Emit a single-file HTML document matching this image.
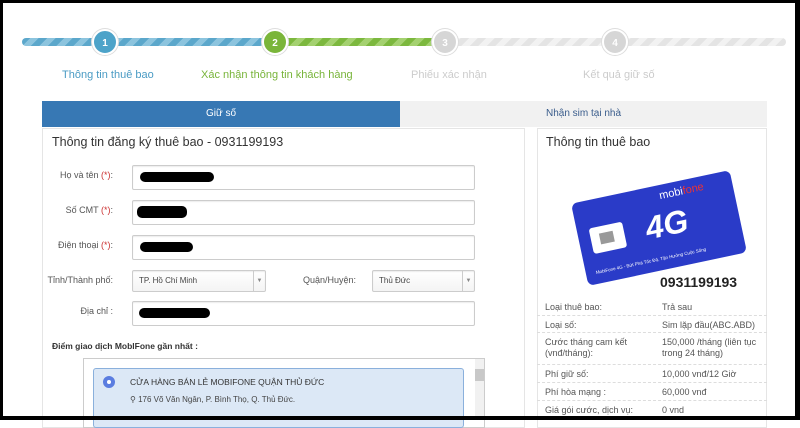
<!DOCTYPE html><html><head><meta charset="utf-8"><style>
*{box-sizing:border-box;margin:0;padding:0}
body{width:800px;height:420px;overflow:hidden;background:#fff;font-family:"Liberation Sans",sans-serif;position:relative}
.frame{position:absolute;inset:0;border:3px solid #000;border-right-width:5px;border-bottom-width:4px;z-index:10;pointer-events:none}
.abs{position:absolute}
.bar{height:8px;top:38px;border-radius:4px}
.circ{width:26px;height:26px;border-radius:50%;top:29px;color:#fff;font-size:10px;text-align:center;line-height:26px;font-weight:bold;border:2px solid #fff;box-shadow:0 0 0 1px #ddd}
.lbl{top:69px;font-size:11px}
.inp{border:1px solid #ccc;border-radius:2px;background:#fff;box-shadow:inset 0 1px 1px rgba(0,0,0,.08)}
.fl{font-size:9px;color:#555;text-align:right;width:80px;left:33px}
.fl span{color:#c33}
.blk{background:#000;height:10px;border-radius:5px}
.row{left:537px;width:230px;border-bottom:1px dashed #ddd;font-size:9px;color:#555}
.row .a{position:absolute;left:8px}.row .b{position:absolute;left:125px}
</style></head><body>
<div class="frame"></div>
<div class="abs bar" style="left:22px;width:250px;background:repeating-linear-gradient(135deg,#5ba7cb 0 6px,#8cc4de 6px 12px)"></div>
<div class="abs bar" style="left:272px;width:172px;background:repeating-linear-gradient(135deg,#7cb83e 0 6px,#a4d170 6px 12px)"></div>
<div class="abs bar" style="left:444px;width:342px;background:repeating-linear-gradient(135deg,#e4e4e4 0 6px,#f2f2f2 6px 12px)"></div>
<div class="abs circ" style="left:92px;background:#4da3c9">1</div>
<div class="abs circ" style="left:262px;background:#7ab53a">2</div>
<div class="abs circ" style="left:432px;background:#d6d6d6">3</div>
<div class="abs circ" style="left:602px;background:#d6d6d6">4</div>
<div class="abs lbl" style="left:62px;color:#4a9bc4">Thông tin thuê bao</div>
<div class="abs lbl" style="left:201px;color:#78b43a">Xác nhận thông tin khách hàng</div>
<div class="abs lbl" style="left:411px;color:#ccc">Phiếu xác nhận</div>
<div class="abs lbl" style="left:583px;color:#ccc">Kết quả giữ số</div>
<div class="abs" style="left:42px;top:101px;width:358px;height:26px;background:#3778b4;color:#fff;font-size:10px;text-align:center;line-height:26px">Giữ số</div>
<div class="abs" style="left:400px;top:101px;width:367px;height:26px;background:#f1f1f1;color:#3a5d8c;font-size:10px;text-align:center;line-height:26px">Nhận sim tại nhà</div>
<div class="abs" style="left:42px;top:128px;width:483px;height:300px;border:1px solid #e5e5e5"></div>
<div class="abs" style="left:537px;top:128px;width:230px;height:300px;border:1px solid #e5e5e5"></div>
<div class="abs" style="left:52px;top:135px;font-size:12.5px;color:#333">Thông tin đăng ký thuê bao - 0931199193</div>
<div class="abs fl" style="top:170px">Họ và tên <span>(*)</span>:</div>
<div class="abs inp" style="left:132px;top:165px;width:343px;height:25px"></div><div class="abs blk" style="left:140px;top:172px;width:74px"></div>
<div class="abs fl" style="top:205px">Số CMT <span>(*)</span>:</div>
<div class="abs inp" style="left:132px;top:200px;width:343px;height:25px"></div><div class="abs blk" style="left:137px;top:206px;width:50px;height:12px"></div>
<div class="abs fl" style="top:240px">Điện thoại <span>(*)</span>:</div>
<div class="abs inp" style="left:132px;top:235px;width:343px;height:25px"></div><div class="abs blk" style="left:140px;top:242px;width:53px"></div>
<div class="abs fl" style="top:275px;font-size:9px">Tỉnh/Thành phố:</div>
<div class="abs inp" style="left:132px;top:270px;width:134px;height:22px;font-size:8px;color:#444;padding:5px 6px;background:linear-gradient(#fff,#f4f4f4)">TP. Hồ Chí Minh<div class="abs" style="right:0;top:0;width:12px;height:20px;border-left:1px solid #ccc;font-size:6px;text-align:center;line-height:20px;color:#888">▼</div></div>
<div class="abs" style="left:303px;top:275px;font-size:9px;color:#555">Quận/Huyện:</div>
<div class="abs inp" style="left:372px;top:270px;width:103px;height:22px;font-size:8px;color:#444;padding:5px 6px;background:linear-gradient(#fff,#f4f4f4)">Thủ Đức<div class="abs" style="right:0;top:0;width:12px;height:20px;border-left:1px solid #ccc;font-size:6px;text-align:center;line-height:20px;color:#888">▼</div></div>
<div class="abs fl" style="top:306px">Địa chỉ :</div>
<div class="abs inp" style="left:132px;top:301px;width:343px;height:25px"></div><div class="abs blk" style="left:139px;top:308px;width:71px"></div>
<div class="abs" style="left:52px;top:341px;font-size:8.5px;font-weight:bold;color:#333">Điểm giao dịch MoblFone gần nhất :</div>
<div class="abs" style="left:83px;top:358px;width:402px;height:70px;border:1px solid #ccc"></div>
<div class="abs" style="left:475px;top:359px;width:9px;height:60px;background:#f1f1f1"><div style="margin-top:10px;height:12px;background:#c8c8c8"></div></div>
<div class="abs" style="left:93px;top:368px;width:371px;height:60px;border:1px solid #8ab0dc;border-radius:3px;background:#dce8f6"></div>
<div class="abs" style="left:103px;top:376px;width:12px;height:12px;border-radius:50%;background:#5b7de0;border:3px solid #5b7de0"><div style="width:4px;height:4px;margin:1px;background:#fff;border-radius:50%"></div></div>
<div class="abs" style="left:130px;top:377px;font-size:8.5px;color:#333">CỬA HÀNG BÁN LẺ MOBIFONE QUẬN THỦ ĐỨC</div>
<div class="abs" style="left:130px;top:395px;font-size:8px;color:#444">⚲ 176 Võ Văn Ngân, P. Bình Thọ, Q. Thủ Đức.</div>
<div class="abs" style="left:546px;top:135px;font-size:12.5px;color:#333">Thông tin thuê bao</div>
<div class="abs" style="left:578px;top:186px;width:162px;height:84px;background:#2a3bc8;border-radius:6px;transform:rotate(-12deg);transform-origin:center">
<div class="abs" style="left:12px;top:28px;width:34px;height:26px;background:#fff;border-radius:3px"><div style="margin:7px 9px;width:14px;height:11px;background:#999"></div></div>
<div class="abs" style="left:68px;top:22px;color:#fff;font-size:32px;font-weight:bold;font-style:italic">4G</div>
<div class="abs" style="left:88px;top:5px;color:#fff;font-size:11px">mobi<span style="color:#e33">fone</span></div>
<div class="abs" style="left:10px;top:70px;color:#fff;font-size:4.5px">MobiFone 4G - Bứt Phá Tốc Độ, Tận Hưởng Cuộc Sống</div>
</div>
<div class="abs" style="left:660px;top:274px;font-size:14px;font-weight:bold;color:#222">0931199193</div>
<div class="abs row" style="top:298px;height:18px"><span class="a" style="top:4px">Loại thuê bao:</span><span class="b" style="top:4px">Trả sau</span></div>
<div class="abs row" style="top:316px;height:17px"><span class="a" style="top:4px">Loại số:</span><span class="b" style="top:4px">Sim lặp đầu(ABC.ABD)</span></div>
<div class="abs row" style="top:333px;height:32px;line-height:11px"><span class="a" style="top:4px">Cước tháng cam kết<br>(vnđ/tháng):</span><span class="b" style="top:4px">150,000 /tháng (liên tục<br>trong 24 tháng)</span></div>
<div class="abs row" style="top:365px;height:18px"><span class="a" style="top:4px">Phí giữ số:</span><span class="b" style="top:4px">10,000 vnđ/12 Giờ</span></div>
<div class="abs row" style="top:383px;height:18px"><span class="a" style="top:4px">Phí hòa mạng :</span><span class="b" style="top:4px">60,000 vnđ</span></div>
<div class="abs row" style="top:401px;height:18px;border:none"><span class="a" style="top:4px">Giá gói cước, dịch vụ:</span><span class="b" style="top:4px">0 vnd</span></div>
</body></html>
